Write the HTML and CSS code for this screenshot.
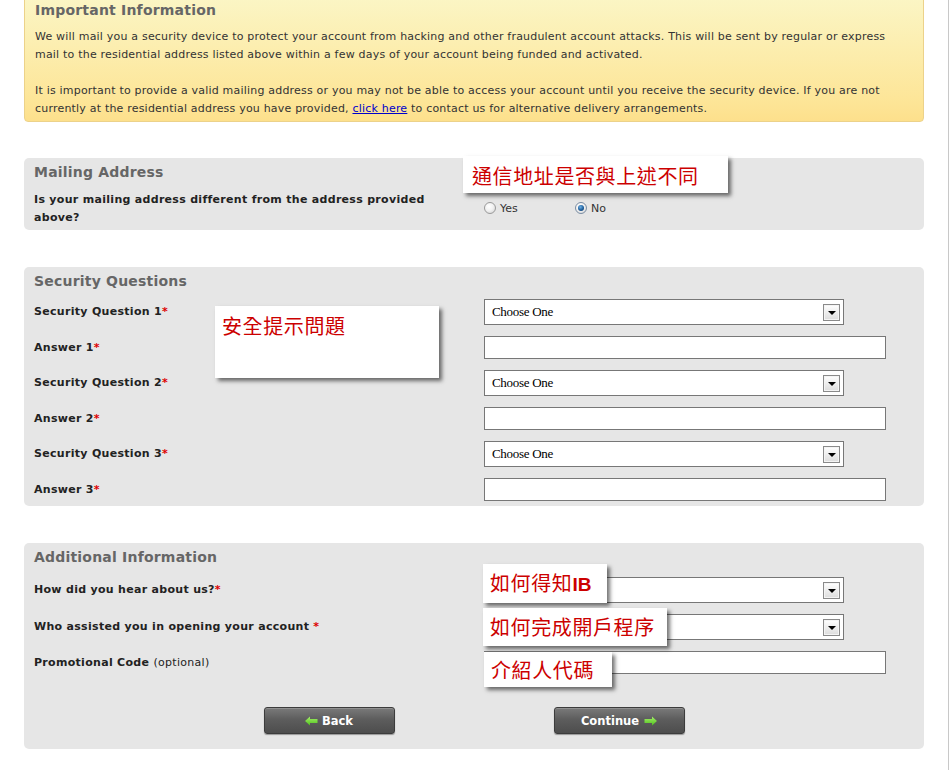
FILE: index.html
```html
<!DOCTYPE html>
<html>
<head>
<meta charset="utf-8">
<title>Account Setup</title>
<link rel="stylesheet" href="styles.css">
</head>
<body>
<div class="page">
  <div class="info">
    <h2 class="info-title">Important Information</h2>
    <p class="info-text">We will mail you a security device to protect your account from hacking and other fraudulent account attacks. This will be sent by regular or express<br>mail to the residential address listed above within a few days of your account being funded and activated.</p>
    <p class="info-text">It is important to provide a valid mailing address or you may not be able to access your account until you receive the security device. If you are not<br>currently at the residential address you have provided, <a class="link" href="#">click here</a> to contact us for alternative delivery arrangements.</p>
  </div>

  <section class="panel panel-mail">
    <h3 class="panel-title">Mailing Address</h3>
    <div class="form-grid">
      <div class="lbl">Is your mailing address different from the address provided<br>above?</div>
      <div class="radios">
        <span class="radio-item"><span class="radio"></span><span class="radio-text">Yes</span></span>
        <span class="radio-item"><span class="radio checked"></span><span class="radio-text">No</span></span>
      </div>
    </div>
    <div class="note note-1">通信地址是否與上述不同</div>
  </section>

  <section class="panel panel-sec">
    <h3 class="panel-title">Security Questions</h3>
    <div class="form-grid">
      <div class="lbl">Security Question 1<span class="req">*</span></div>
      <div class="field"><div class="select"><span class="select-text">Choose One</span><span class="select-btn"><span class="tri"></span></span></div></div>
      <div class="lbl">Answer 1<span class="req">*</span></div>
      <div class="field"><div class="input"></div></div>
      <div class="lbl">Security Question 2<span class="req">*</span></div>
      <div class="field"><div class="select"><span class="select-text">Choose One</span><span class="select-btn"><span class="tri"></span></span></div></div>
      <div class="lbl">Answer 2<span class="req">*</span></div>
      <div class="field"><div class="input"></div></div>
      <div class="lbl">Security Question 3<span class="req">*</span></div>
      <div class="field"><div class="select"><span class="select-text">Choose One</span><span class="select-btn"><span class="tri"></span></span></div></div>
      <div class="lbl">Answer 3<span class="req">*</span></div>
      <div class="field"><div class="input"></div></div>
    </div>
    <div class="note note-2">安全提示問題</div>
  </section>

  <section class="panel panel-add">
    <h3 class="panel-title">Additional Information</h3>
    <div class="form-grid">
      <div class="lbl">How did you hear about us?<span class="req">*</span></div>
      <div class="field"><div class="select"><span class="select-text"></span><span class="select-btn"><span class="tri"></span></span></div></div>
      <div class="lbl">Who assisted you in opening your account <span class="req">*</span></div>
      <div class="field"><div class="select"><span class="select-text"></span><span class="select-btn"><span class="tri"></span></span></div></div>
      <div class="lbl">Promotional Code <span class="opt">(optional)</span></div>
      <div class="field"><div class="input"></div></div>
    </div>
    <div class="buttons">
      <a class="btn" href="#"><svg class="arrow" width="13" height="10" viewBox="0 0 13 10"><defs><linearGradient id="ga" x1="0" y1="0" x2="0" y2="1"><stop offset="0" stop-color="#a6ef6a"/><stop offset="1" stop-color="#4fc21d"/></linearGradient></defs><polygon points="0,5 5,0.5 5,3 12.5,3 12.5,7 5,7 5,9.5" fill="url(#ga)"/></svg>Back</a>
      <a class="btn" href="#">Continue<svg class="arrow arrow-r" width="13" height="10" viewBox="0 0 13 10"><defs><linearGradient id="gb" x1="0" y1="0" x2="0" y2="1"><stop offset="0" stop-color="#a6ef6a"/><stop offset="1" stop-color="#4fc21d"/></linearGradient></defs><polygon points="13,5 8,0.5 8,3 0.5,3 0.5,7 8,7 8,9.5" fill="url(#gb)"/></svg></a>
    </div>
    <div class="note note-3">如何得知<span class="latin">IB</span></div>
    <div class="note note-4">如何完成開戶程序</div>
    <div class="note note-5">介紹人代碼</div>
  </section>
</div>
</body>
</html>
```

FILE: styles.css
```css
html, body {
  margin: 0;
  padding: 0;
  background: #ffffff;
}

body {
  font-family: "DejaVu Sans", Verdana, sans-serif;
  font-size: 11px;
  color: #222;
}

.page {
  width: 900px;
  min-height: 770px;
  padding: 0 24px 0 24px;
  border-right: 1px solid #c8c8c8;
  overflow: hidden;
}

/* Important information box */
.info {
  margin-top: -6px;
  padding: 6px 10px 3px 10px;
  background: linear-gradient(#fbf6c6, #fde597 85%, #fde08c);
  border: 1px solid #ecd28a;
  border-radius: 4px;
}

.info-title {
  margin: 0;
  font-size: 14px;
  line-height: 18px;
  font-weight: bold;
  color: #666;
  letter-spacing: 0.2px;
}

.info-text {
  margin: 9px 0 0 0;
  font-size: 11px;
  line-height: 18px;
  color: #333;
  white-space: nowrap;
  letter-spacing: 0.2px;
}

.info-text + .info-text {
  margin-top: 18px;
}

.link {
  color: #0000cc;
  text-decoration: underline;
}

/* Panels */
.panel {
  position: relative;
  margin-top: 37px;
  padding: 5px 10px 5px 10px;
  background: #e6e6e6;
  border-radius: 5px;
}

.panel-title {
  margin: 0;
  font-size: 14px;
  line-height: 18px;
  font-weight: bold;
  color: #666;
  letter-spacing: 0.2px;
}

.form-grid {
  display: grid;
  grid-template-columns: 440px 1fr;
  column-gap: 10px;
  row-gap: 11px;
  align-items: center;
  margin-top: 9px;
}

.panel-mail {
  margin-top: 36px;
  padding-bottom: 3px;
}

.panel-mail .form-grid {
  margin-top: 10px;
}

.panel-add .form-grid {
  margin-top: 11px;
}

.lbl {
  font-weight: bold;
  font-size: 11px;
  line-height: 18px;
  color: #222;
  white-space: nowrap;
  letter-spacing: 0.3px;
}

.req {
  color: #d00;
  font-weight: bold;
}

.opt {
  font-weight: normal;
}

/* Radios */
.radios {
  display: flex;
  align-items: center;
  height: 18px;
  margin-top: -2px;
}

.radio-item {
  display: inline-flex;
  align-items: center;
  width: 91px;
}

.radio {
  display: inline-block;
  box-sizing: border-box;
  width: 12px;
  height: 12px;
  border-radius: 50%;
  border: 1px solid #9a9a9a;
  background: radial-gradient(circle at 40% 35%, #ffffff 0%, #f2f2f2 45%, #cfcfcf 100%);
  margin-right: 4px;
  position: relative;
}

.radio.checked {
  border-color: #7a8da3;
}

.radio.checked::after {
  content: "";
  position: absolute;
  left: 2px;
  top: 2px;
  width: 6px;
  height: 6px;
  border-radius: 50%;
  background: radial-gradient(circle at 40% 35%, #6fb2e6 0%, #1f5f9c 55%, #0c2f5a 100%);
}

.radio-text {
  font-family: "DejaVu Sans", Verdana, sans-serif;
  font-size: 11px;
  color: #333;
}

/* Fields */
.select {
  box-sizing: border-box;
  width: 360px;
  height: 26px;
  border: 1px solid #777;
  background: #fff;
  display: flex;
  align-items: center;
  justify-content: space-between;
  padding: 0 3px 0 7px;
}

.select-text {
  font-family: "Liberation Serif", "Times New Roman", serif;
  font-size: 13px;
  color: #000;
  letter-spacing: -0.3px;
}

.select-btn {
  box-sizing: border-box;
  width: 17px;
  height: 17px;
  border: 1px solid #8a8a8a;
  background: linear-gradient(#ffffff, #dcdcdc);
  box-shadow: inset 0 0 0 1px #f4f4f4;
  display: flex;
  align-items: center;
  justify-content: center;
}

.tri {
  width: 0;
  height: 0;
  border-left: 4px solid transparent;
  border-right: 4px solid transparent;
  border-top: 4px solid #000;
  margin-top: 1px;
}

.input {
  box-sizing: border-box;
  width: 402px;
  height: 23px;
  border: 1px solid #777;
  background: #fff;
}

/* Buttons */
.buttons {
  display: flex;
  justify-content: center;
  gap: 159px;
  margin-top: 33px;
  padding-bottom: 10px;
}

.btn {
  box-sizing: border-box;
  width: 131px;
  height: 27px;
  border: 1px solid #3c3c3c;
  border-radius: 3px;
  background: linear-gradient(#7a7a7a, #5d5d5d 45%, #4d4d4d);
  box-shadow: 0 1px 1px rgba(0, 0, 0, 0.35), inset 0 1px 0 rgba(255, 255, 255, 0.18);
  color: #fff;
  font-weight: bold;
  font-size: 11.5px;
  text-decoration: none;
  display: flex;
  align-items: center;
  justify-content: center;
}

.arrow {
  margin-right: 4px;
}

.arrow-r {
  margin-right: 0;
  margin-left: 5px;
}

/* Annotation notes */
.note {
  position: absolute;
  box-sizing: border-box;
  background: #fff;
  color: #cc0000;
  font-family: "Noto Sans CJK TC", "Noto Sans CJK SC", sans-serif;
  font-size: 20px;
  line-height: 24px;
  letter-spacing: 0.6px;
  box-shadow: 3px 3px 4px rgba(0, 0, 0, 0.55);
  white-space: nowrap;
}

.latin {
  font-family: "Liberation Sans", Arial, sans-serif;
  font-weight: bold;
  font-size: 19px;
  letter-spacing: 0;
}

.note-1 {
  left: 439px;
  top: -2px;
  width: 265px;
  height: 37px;
  padding: 8px 0 0 9px;
}

.note-2 {
  left: 191px;
  top: 39px;
  width: 224px;
  height: 72px;
  padding: 8px 0 0 7px;
}

.note-3 {
  left: 459px;
  top: 21px;
  width: 124px;
  height: 39px;
  padding: 7px 0 0 7px;
}

.note-4 {
  left: 459px;
  top: 65px;
  width: 184px;
  height: 38px;
  padding: 7px 0 0 7px;
}

.note-5 {
  left: 460px;
  top: 109px;
  width: 128px;
  height: 35px;
  padding: 6px 0 0 7px;
}
```
